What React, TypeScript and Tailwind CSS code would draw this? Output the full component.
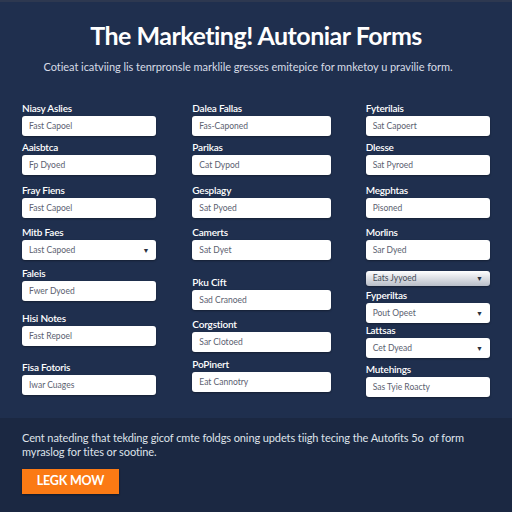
type Field = {
  label?: string;
  value: string;
  mt: string;
  select?: boolean;
  muted?: boolean;
  h?: string;
};

const colOne: Field[] = [
  { label: "Niasy Aslies", value: "Fast Capoel", mt: "mt-0" },
  { label: "Aaisbtca", value: "Fp Dyoed", mt: "mt-[5px]" },
  { label: "Fray Fiens", value: "Fast Capoel", mt: "mt-[9px]" },
  { label: "Mitb Faes", value: "Last Capoed", mt: "mt-[8px]", select: true },
  { label: "Faleis", value: "Fwer Dyoed", mt: "mt-[7px]" },
  { label: "Hisi Notes", value: "Fast Repoel", mt: "mt-[11px]" },
  { label: "Fisa Fotoris", value: "Iwar Cuages", mt: "mt-[15px]" },
];

const colTwo: Field[] = [
  { label: "Dalea Fallas", value: "Fas-Caponed", mt: "mt-0" },
  { label: "Parikas", value: "Cat Dypod", mt: "mt-[5px]" },
  { label: "Gesplagy", value: "Sat Pyoed", mt: "mt-[9px]" },
  { label: "Camerts", value: "Sat Dyet", mt: "mt-[8px]" },
  { label: "Pku Cift", value: "Sad Cranoed", mt: "mt-[16px]" },
  { label: "Corgstiont", value: "Sar Clotoed", mt: "mt-[8px]" },
  { label: "PoPinert", value: "Eat Cannotry", mt: "mt-[6px]" },
];

const colThree: Field[] = [
  { label: "Fyterilais", value: "Sat Capoert", mt: "mt-0" },
  { label: "Dlesse", value: "Sat Pyroed", mt: "mt-[5px]" },
  { label: "Megphtas", value: "Pisoned", mt: "mt-[9px]" },
  { label: "Morlins", value: "Sar Dyed", mt: "mt-[8px]" },
  { value: "Eats Jyyoed", mt: "mt-[11px]", select: true, muted: true, h: "h-[15px]" },
  { label: "Fyperiltas", value: "Pout Opeet", mt: "mt-[3px]", select: true },
  { label: "Lattsas", value: "Cet Dyead", mt: "mt-[1px]", select: true },
  { label: "Mutehings", value: "Sas Tyie Roacty", mt: "mt-[5px]" },
];

function FormField({ f }: { f: Field }) {
  return (
    <div className={f.mt}>
      {f.label && (
        <div className="text-[10px] leading-[12px] font-semibold text-white tracking-[-0.2px]">
          {f.label}
        </div>
      )}
      <div
        className={`${f.label ? "mt-[2px]" : ""} ${f.h ?? "h-[20px]"} flex items-center justify-between rounded-[3px] px-[7px] shadow-[0_1px_2px_rgba(0,0,0,0.35)] ${
          f.muted ? "bg-gradient-to-b from-white to-[#b9bec8]" : "bg-white"
        }`}
      >
        <span className={`text-[8.5px] ${f.muted ? "text-[#444b57]" : "text-[#5b6170]"}`}>{f.value}</span>
        {f.select && <span className="text-[7px] text-[#2a3140]">▼</span>}
      </div>
    </div>
  );
}

export default function App() {
  return (
    <div
      className="w-[512px] h-[512px] overflow-hidden bg-[#1f2f4e] flex flex-col"
      style={{ fontFamily: "Lato, 'Liberation Sans', sans-serif" }}
    >
      <div className="h-[2px] bg-[#2d3850]" />
      <div className="pt-[18px] text-center">
        <h1 className="text-[25px] leading-[30px] font-bold text-white tracking-[-0.5px]">
          The Marketing! Autoniar Forms
        </h1>
        <p className="mt-[10px] pr-[16px] text-[11px] leading-[14px] text-[#d7dce6] tracking-[-0.05px]">
          Cotieat icatviing lis tenrpronsle marklile gresses emitepice for mnketoy u pravilie form.
        </p>
      </div>

      <div className="mt-[28px] flex px-[22px]">
        <div className="w-[135px] flex flex-col">
          {colOne.map((f, i) => (
            <FormField key={i} f={f} />
          ))}
        </div>
        <div className="ml-[36px] w-[139px] flex flex-col">
          {colTwo.map((f, i) => (
            <FormField key={i} f={f} />
          ))}
        </div>
        <div className="ml-[35px] w-[125px] flex flex-col">
          {colThree.map((f, i) => (
            <FormField key={i} f={f} />
          ))}
        </div>
      </div>

      <div className="mt-auto h-[94px] bg-[#1b2842] px-[22px] pt-[13px]">
        <p className="text-[11px] leading-[14px] text-[#dfe3ea] tracking-[-0.1px]">
          Cent nateding that tekding gicof cmte foldgs oning updets tiigh tecing the Autofits 5o&nbsp; of form
          myraslog for tites or sootine.
        </p>
        <button className="mt-[10px] h-[25px] w-[97px] bg-[#fb7a14] text-white text-[12.5px] font-bold tracking-[-0.2px] shadow-[0_1px_2px_rgba(0,0,0,0.4)]">
          LEGK MOW
        </button>
      </div>
    </div>
  );
}
